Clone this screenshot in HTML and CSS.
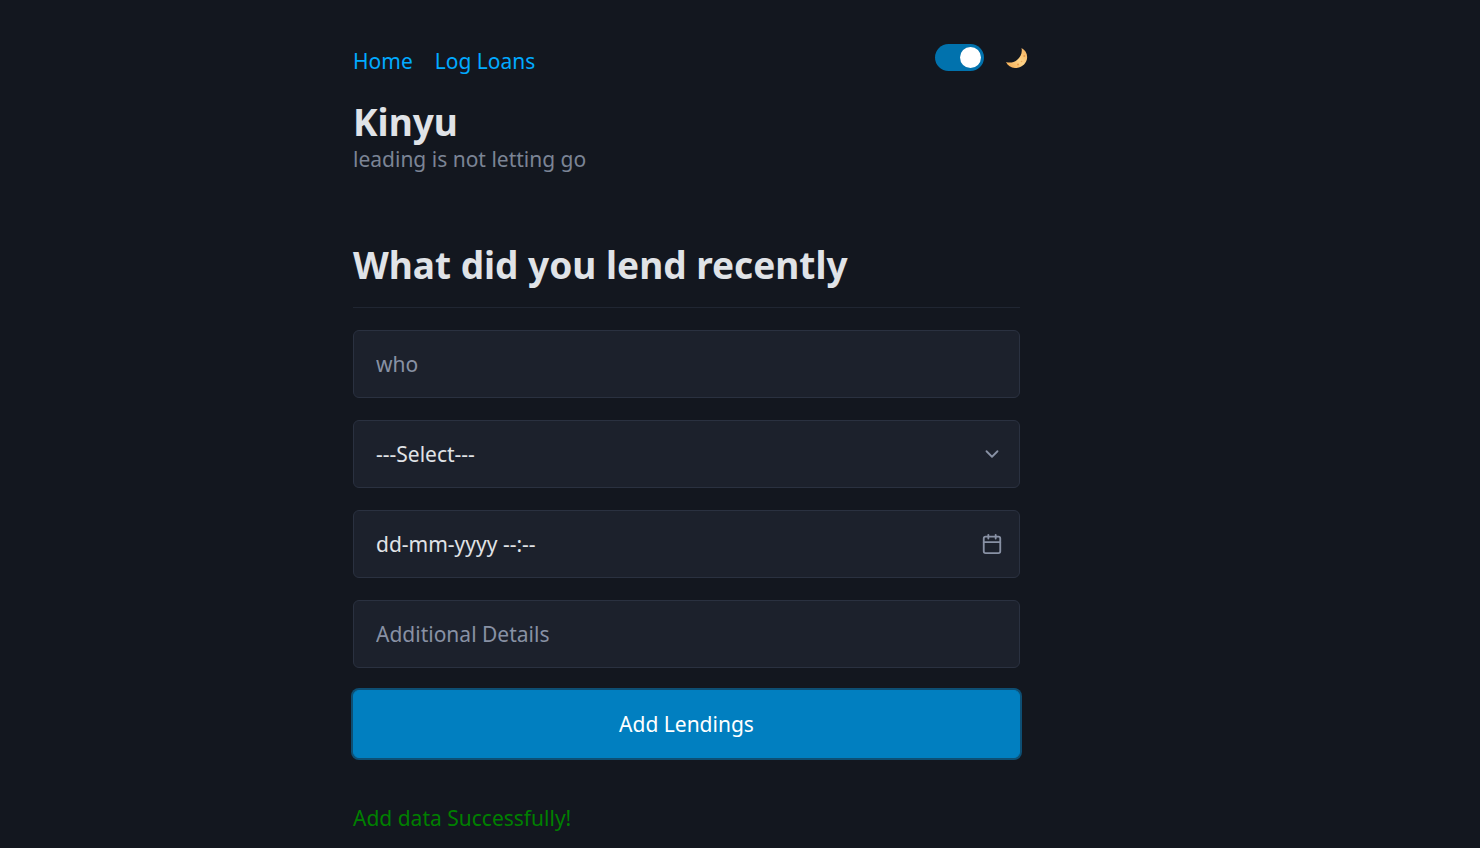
FILE: index.html
```html
<!DOCTYPE html>
<html lang="en">
<head>
<meta charset="utf-8">
<meta name="viewport" content="width=device-width, initial-scale=1">
<title>Kinyu</title>
<link rel="stylesheet" href="styles.css">
</head>
<body>
<div class="page">
  <header class="topbar">
    <nav class="links">
      <a href="#home">Home</a>
      <a href="#loans">Log Loans</a>
    </nav>
    <label class="theme">
      <input class="switch" type="checkbox" role="switch" aria-label="Dark theme" checked>
      <svg class="moon" viewBox="0 0 22 22" aria-hidden="true">
        <defs>
          <linearGradient id="glow" x1="0" y1="1" x2="1" y2="0">
            <stop offset="0" stop-color="#f5a84c"/>
            <stop offset="0.5" stop-color="#ffd488"/>
            <stop offset="1" stop-color="#f3ae5c"/>
          </linearGradient>
        </defs>
        <path d="M15.500 1C20 3.400 22 8 20.800 12.800C19.200 18 14.500 21.200 9 21C5 20.800 1.600 18.600 0 15C3.800 16.200 7.800 15.600 11 13C14.700 10 16.600 5.600 15.500 1Z" fill="url(#glow)"/>
        <circle cx="18.300" cy="9" r="1" fill="#e89a4a"/>
        <circle cx="12" cy="17.500" r="1" fill="#ec9d4a"/>
        <circle cx="15.500" cy="14.500" r="0.800" fill="#f0aa5a"/>
      </svg>
    </label>
  </header>
  <main>
    <hgroup class="brand">
      <h1>Kinyu</h1>
      <p>leading is not letting go</p>
    </hgroup>
    <h2>What did you lend recently</h2>
    <hr>
    <form class="form">
      <input class="field" type="text" placeholder="who" aria-label="who">
      <div class="control">
        <select class="field" aria-label="Type">
          <option>---Select---</option>
        </select>
        <svg class="icon" viewBox="0 0 24 24" aria-hidden="true"><path d="m6 9 6 6 6-6"/></svg>
      </div>
      <div class="control">
        <input class="field date" type="text" placeholder="dd-mm-yyyy --:--" aria-label="Date and time">
        <svg class="icon" viewBox="0 0 24 24" aria-hidden="true"><rect x="3" y="4" width="18" height="18" rx="2"/><path d="M16 2v4M8 2v4M3 10h18"/></svg>
      </div>
      <input class="field" type="text" placeholder="Additional Details" aria-label="Additional Details">
      <button class="submit" type="button">Add Lendings</button>
    </form>
    <p class="status" role="status">Add data Successfully!</p>
  </main>
</div>
</body>
</html>
```
FILE: styles.css
```css
* {
  box-sizing: border-box;
}

body {
  margin: 0;
  background: #13171f;
  color: #c2c7d0;
  font-family: "Segoe UI", "Noto Sans", sans-serif;
  font-size: 21px;
  line-height: 34px;
}

.page {
  display: grid;
  grid-template-columns: 353fr 667fr 460fr;
  padding-top: 40px;
}

.page > * {
  grid-column: 2;
  min-width: 0;
}

.topbar {
  display: flex;
  justify-content: space-between;
  align-items: flex-start;
  margin-right: -8px;
}

.links {
  display: flex;
  gap: 22px;
  padding-top: 4px;
}

.links a {
  color: #01aaff;
  text-decoration: none;
}

.theme {
  display: flex;
  align-items: center;
  gap: 22px;
  padding-top: 4px;
}

.switch {
  appearance: none;
  display: flex;
  width: 49px;
  height: 27px;
  margin: 0;
  padding: 3px;
  border-radius: 14px;
  background: #2a3140;
}

.switch::before {
  content: "";
  width: 21px;
  height: 21px;
  border-radius: 50%;
  background: #fff;
}

.switch:checked {
  justify-content: flex-end;
  background: #0172ad;
}

.moon {
  width: 22px;
  height: 22px;
}

h1,
h2,
p {
  margin: 0;
}

h1,
h2 {
  color: #e0e3e7;
  font-size: 37px;
  font-weight: 700;
  line-height: 42px;
}

.brand {
  margin: 23px 0 69px;
}

.brand p {
  color: #7b8495;
  line-height: 32px;
}

hr {
  margin: 21px 0 22px;
  border: 0;
  border-top: 1px solid #202632;
}

.form {
  display: grid;
  gap: 22px;
}

.control {
  position: relative;
}

.field,
.submit {
  display: block;
  width: 100%;
  height: 68px;
  margin: 0;
  padding: 0 22px;
  border: 1px solid #2a3140;
  border-radius: 6px;
  font: inherit;
}

.field {
  appearance: none;
  background: #1c212c;
  color: #e0e3e7;
}

.field::placeholder {
  color: #8891a4;
  opacity: 1;
}

.date::placeholder {
  color: #e0e3e7;
}

.icon {
  position: absolute;
  top: 50%;
  right: 17px;
  width: 22px;
  height: 22px;
  transform: translateY(-50%);
  fill: none;
  stroke: #8891a4;
  stroke-width: 2;
  stroke-linecap: round;
  stroke-linejoin: round;
  pointer-events: none;
}

.submit {
  border-color: #017fc0;
  background: #017fc0;
  box-shadow: 0 0 0 2px #0d4f74;
  color: #fff;
}

.status {
  margin-top: 43px;
  color: #008000;
}
```
